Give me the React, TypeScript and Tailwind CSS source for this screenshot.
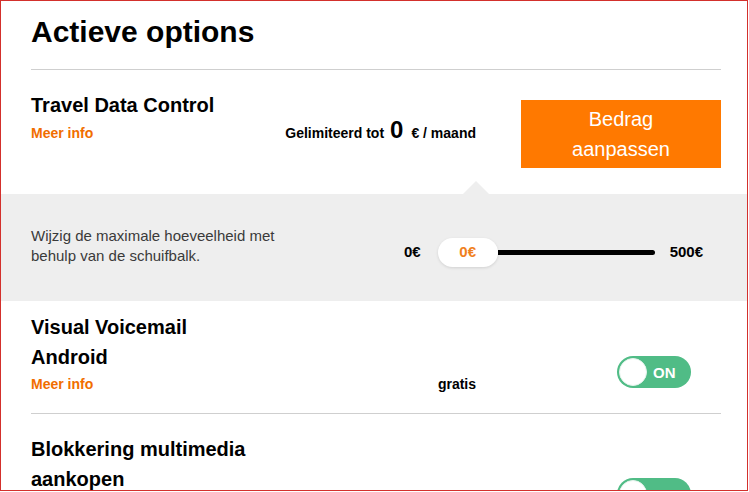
const font = { fontFamily: '"Liberation Sans", Arial, sans-serif' };

const Toggle = () => (
  <div className="flex h-[32px] w-[74px] items-center rounded-full bg-[#50bc86]">
    <span className="ml-[2px] h-[28px] w-[28px] rounded-full border border-[#e6f4ed] bg-white" />
    <span className="ml-[6px] text-[15px] font-bold leading-none text-white">ON</span>
  </div>
);

const OptionRow = ({ title, info, price }: { title: string; info?: boolean; price: string }) => (
  <div className="grid grid-cols-[225px_220px_245px]">
    <div>
      <h3 className="text-[20px] font-bold leading-[30px] text-black">{title}</h3>
      {info && (
        <a href="#" className="mt-[2px] block text-[14px] font-bold leading-[20px] text-[#f16e00]">
          Meer info
        </a>
      )}
    </div>
    <p className="mt-[62px] text-right text-[14px] font-bold leading-[20px] text-black">{price}</p>
    <div className="mt-[44px] flex justify-end pr-[30px]">
      <Toggle />
    </div>
  </div>
);

export default function App() {
  return (
    <div style={font} className="h-[491px] w-[748px] overflow-hidden border border-[#d3302c] bg-white">
      <div className="ml-[30px] mr-[26px] h-[69px] border-b border-[#cfcfcf] pt-[13px]">
        <h1 className="text-[30px] font-bold leading-[36px] text-black">Actieve options</h1>
      </div>

      {/* travel data control */}
      <div className="h-[124px] pl-[30px] pr-[26px] pt-[20px]">
        <div className="grid grid-cols-[225px_220px_245px]">
          <div>
            <h3 className="text-[20px] font-bold leading-[30px] text-black">Travel Data Control</h3>
            <a href="#" className="mt-[3px] block text-[14px] font-bold leading-[20px] text-[#f16e00]">
              Meer info
            </a>
          </div>
          <div className="mt-[28px] flex items-baseline justify-end font-bold text-black">
            <span className="text-[14px] leading-none">Gelimiteerd tot</span>
            <span className="ml-[6px] text-[24px] leading-none">0</span>
            <span className="ml-[8px] text-[14px] leading-none">€ / maand</span>
          </div>
          <div className="flex justify-end">
            <button className="mt-[10px] h-[68px] w-[200px] bg-[#ff7900] py-[4px] text-[20px] leading-[30px] text-white">
              Bedrag
              <br />
              aanpassen
            </button>
          </div>
        </div>
      </div>

      {/* slider panel */}
      <div className="relative flex h-[107px] items-start bg-[#eeeeee] pl-[30px] pt-[32px]">
        <span className="absolute bottom-full left-[462px] h-0 w-0 border-x-[13px] border-b-[13px] border-x-transparent border-b-[#eeeeee]" />
        <p className="w-[373px] pr-[120px] text-[15px] leading-[20px] text-[#3a3a3a]">
          Wijzig de maximale hoeveelheid met behulp van de schuifbalk.
        </p>
        <div className="mt-[12px] flex h-[29px] items-center text-[15px] font-bold text-black">
          <span>0€</span>
          <div className="ml-[17px] flex h-[29px] w-[60px] items-center justify-center rounded-full bg-white text-[#f0801c] shadow-[0_1px_3px_rgba(0,0,0,0.12)]">
            0€
          </div>
          <div className="h-[5px] w-[157px] rounded-r-full bg-black" />
          <span className="ml-[15px]">500€</span>
        </div>
      </div>

      <div className="ml-[30px] mr-[26px] h-[113px] border-b border-[#cfcfcf] pt-[11px]">
        <OptionRow title="Visual Voicemail Android" info price="gratis" />
      </div>

      <div className="ml-[30px] mr-[26px] pt-[20px]">
        <OptionRow title="Blokkering multimedia aankopen" price="" />
      </div>
    </div>
  );
}
